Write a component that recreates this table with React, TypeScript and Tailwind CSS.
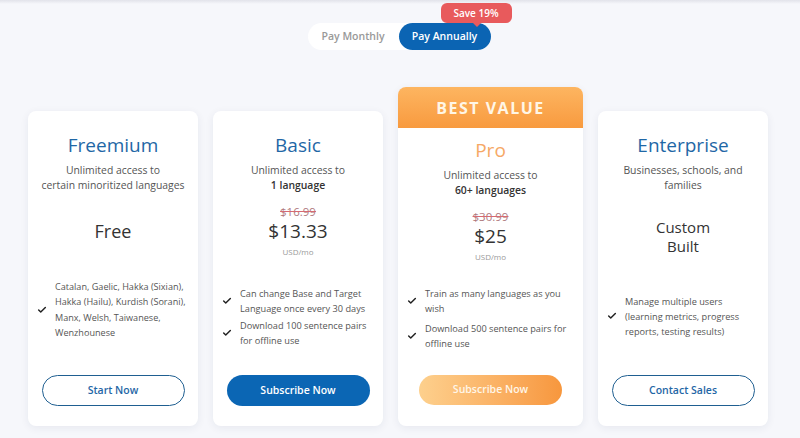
import React from "react";
import { Check } from "lucide-react";

type Plan = {
  name: string;
  desc: React.ReactNode;
  oldPrice?: string;
  price: React.ReactNode;
  unit?: string;
  features: string[];
  featureClass: string;
  listClass: string;
  cta: string;
  variant: "outline" | "solid" | "pro";
};

const plans: Plan[] = [
  {
    name: "Freemium",
    desc: (
      <>
        Unlimited access to
        <br />
        certain minoritized languages
      </>
    ),
    price: <span className="text-[18px] leading-[24px]">Free</span>,
    features: [
      "Catalan, Gaelic, Hakka (Sixian), Hakka (Hailu), Kurdish (Sorani), Manx, Welsh, Taiwanese, Wenzhounese",
    ],
    featureClass: "text-[9.1px]",
    listClass: "pb-[17px] pr-[5px]",
    cta: "Start Now",
    variant: "outline",
  },
  {
    name: "Basic",
    desc: (
      <>
        Unlimited access to
        <br />
        <span className="font-semibold text-[#333]">1 language</span>
      </>
    ),
    oldPrice: "$16.99",
    price: <span className="text-[19px] leading-[25px]">$13.33</span>,
    unit: "USD/mo",
    features: [
      "Can change Base and Target Language once every 30 days",
      "Download 100 sentence pairs for offline use",
    ],
    featureClass: "text-[9.2px]",
    listClass: "gap-[1px] pb-[2px] pr-[10px]",
    cta: "Subscribe Now",
    variant: "solid",
  },
  {
    name: "Pro",
    desc: (
      <>
        Unlimited access to
        <br />
        <span className="font-semibold text-[#333]">60+ languages</span>
      </>
    ),
    oldPrice: "$30.99",
    price: <span className="text-[19px] leading-[25px]">$25</span>,
    unit: "USD/mo",
    features: [
      "Train as many languages as you wish",
      "Download 500 sentence pairs for offline use",
    ],
    featureClass: "text-[9.2px]",
    listClass: "gap-[4px] pb-[4px] pr-[10px]",
    cta: "Subscribe Now",
    variant: "pro",
  },
  {
    name: "Enterprise",
    desc: (
      <>
        Businesses, schools, and
        <br />
        families
      </>
    ),
    price: (
      <span className="mt-[12px] block text-center text-[15px] leading-[19px]">
        Custom
        <br />
        Built
      </span>
    ),
    features: [
      "Manage multiple users (learning metrics, progress reports, testing results)",
    ],
    featureClass: "text-[9.2px]",
    listClass: "pb-[3px] pr-[10px]",
    cta: "Contact Sales",
    variant: "outline",
  },
];

const PlanCard: React.FC<{ plan: Plan }> = ({ plan }) => {
  const isPro = plan.variant === "pro";
  return (
    <div
      className={`flex flex-col rounded-lg bg-white shadow-[0_2px_8px_rgba(30,40,90,0.07)] ${
        isPro ? "h-[339px] w-[185px]" : "h-[315px] w-[170px]"
      }`}
    >
      {isPro && (
        <div className="flex h-[41px] items-center justify-center rounded-t-lg bg-gradient-to-b from-[#fdb560] to-[#f89a3e] text-[16px] font-bold tracking-[1.5px] text-[#fff6e6]">
          BEST VALUE
        </div>
      )}
      <div
        className={`flex flex-1 flex-col ${isPro ? "pt-[8px] pb-[21px]" : "pt-[20px] pb-[20px]"}`}
      >
        <h3
          className={`text-center text-[19px] leading-[28px] ${
            isPro ? "text-[#f6a865]" : "text-[#1f67a6]"
          }`}
        >
          {plan.name}
        </h3>
        <p className="mt-[4px] text-center text-[10.4px] leading-[15px] text-[#555]">
          {plan.desc}
        </p>
        <div className="mt-[8px] flex h-[60px] flex-col items-center justify-center text-[#333]">
          {plan.oldPrice && (
            <span className="text-[11.5px] leading-[14px] text-[#b07a80] line-through decoration-[#d66a72]">
              {plan.oldPrice}
            </span>
          )}
          {plan.price}
          {plan.unit && (
            <span className="mt-[3px] text-[8px] leading-[10px] text-[#999]">
              {plan.unit}
            </span>
          )}
        </div>
        <div className={`flex flex-1 flex-col justify-center pl-[9px] ${plan.listClass}`}>
          {plan.features.map((f, i) => (
            <div key={i} className="flex items-center gap-[8px]">
              <Check size={10} strokeWidth={3.5} className="shrink-0 text-[#222]" />
              <span className={`leading-[15.3px] text-[#555] ${plan.featureClass}`}>
                {f}
              </span>
            </div>
          ))}
        </div>
        <div className="flex justify-center">
          {plan.variant === "outline" && (
            <button className="h-[31px] w-[143px] rounded-full border-[1.5px] border-[#1f5f91] text-[10.5px] font-semibold text-[#1f67a6]">
              {plan.cta}
            </button>
          )}
          {plan.variant === "solid" && (
            <button className="h-[31px] w-[143px] rounded-full bg-[#0b66b4] text-[10.5px] font-semibold text-white">
              {plan.cta}
            </button>
          )}
          {plan.variant === "pro" && (
            <button className="h-[30px] w-[143px] rounded-full bg-gradient-to-r from-[#fdd08d] to-[#f7973d] text-[10.5px] font-semibold text-[#fff6e8]">
              {plan.cta}
            </button>
          )}
        </div>
      </div>
    </div>
  );
};

export default function App() {
  return (
    <div
      className="flex h-[438px] w-[800px] flex-col overflow-hidden bg-[#f6f7fb]"
      style={{ fontFamily: '"Open Sans", "Noto Sans", sans-serif' }}
    >
      <div className="h-[4px] bg-gradient-to-b from-[#e2e3ea] to-[#f6f7fb]" />
      <div className="mt-[19px] flex justify-center">
        <div className="relative ml-[-2px] flex h-[27px] items-center rounded-full bg-white">
          <button className="h-[27px] w-[91px] text-[10.5px] font-semibold text-[#999]">
            Pay Monthly
          </button>
          <button className="h-[27px] w-[92px] rounded-full bg-[#0b64b3] text-[10.5px] font-semibold text-white">
            Pay Annually
          </button>
          <div className="absolute left-[133px] top-[-20px] flex h-[20px] w-[71px] items-center justify-center rounded-md bg-[#e85a5c] text-[10px] font-semibold text-white">
            Save 19%
            <span className="absolute bottom-[-4px] left-[32px] h-0 w-0 border-x-[4px] border-t-[4px] border-x-transparent border-t-[#e85a5c]" />
          </div>
        </div>
      </div>
      <div className="mt-[37px] flex items-end gap-[15px] pl-[28px]">
        {plans.map((p) => (
          <PlanCard key={p.name} plan={p} />
        ))}
      </div>
    </div>
  );
}
